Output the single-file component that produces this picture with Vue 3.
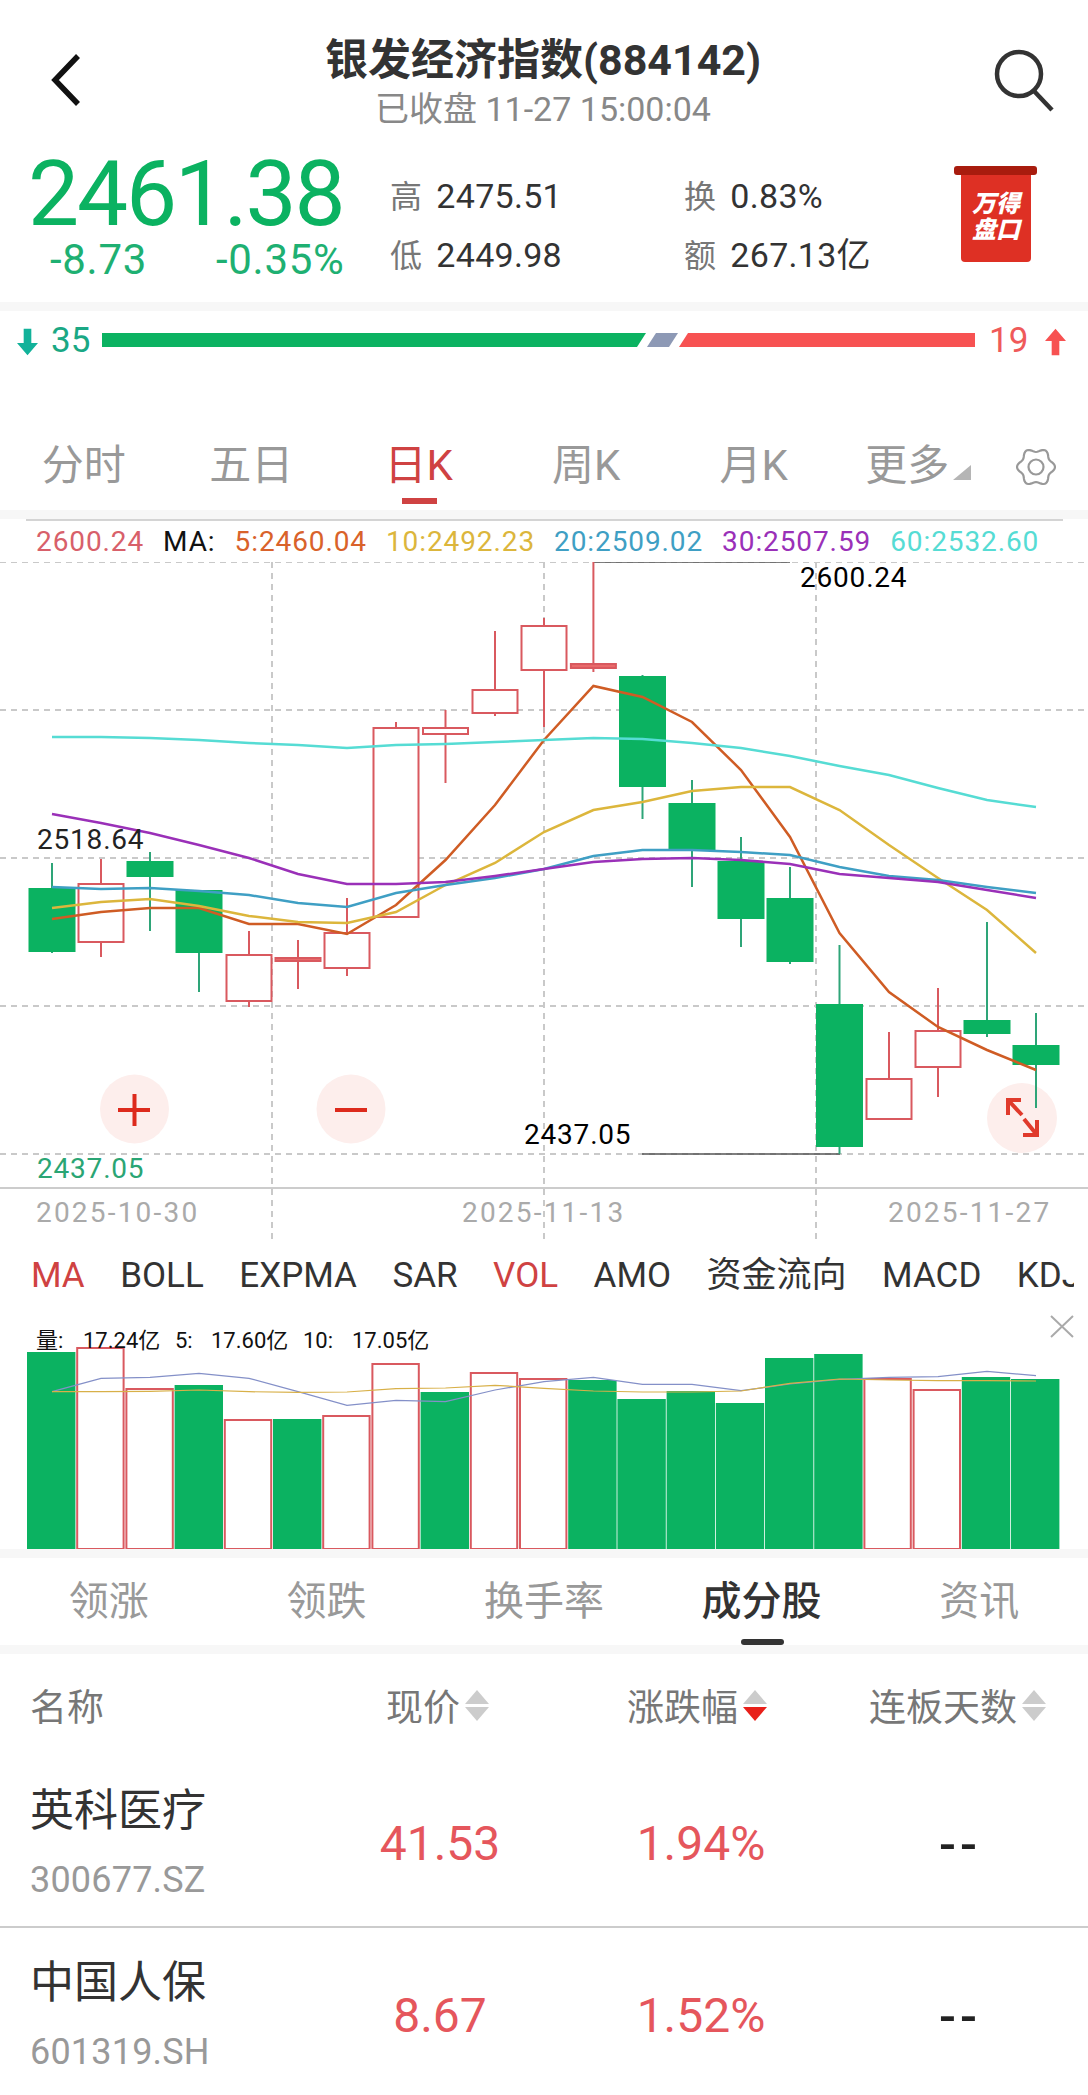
<template>
  <div class="page">
    <!-- 顶部标题 -->
    <header class="top-bar">
      <svg class="back" viewBox="0 0 32 56"><polyline points="28,4 5,28 28,52" /></svg>
      <div class="title-box">
        <div class="title">银发经济指数(884142)</div>
        <div class="subtitle">已收盘 11-27 15:00:04</div>
      </div>
      <svg class="search" viewBox="0 0 64 64">
        <circle cx="27" cy="25" r="22" />
        <line x1="42" y1="42" x2="60" y2="61" />
      </svg>
    </header>

    <section class="quote">
      <div class="price-box">
        <div class="price">2461.38</div>
        <div class="change"><span>-8.73</span><span>-0.35%</span></div>
      </div>
      <div class="stats">
        <div v-for="s in stats" :key="s.label" class="stat">
          <span class="stat-label">{{ s.label }}</span>{{ s.value }}
        </div>
      </div>
      <div class="wind">
        <div class="wind-rod"></div>
        <div class="wind-body"><span>万得</span><span>盘口</span></div>
      </div>
    </section>
    <div class="band"></div>

    <section class="breadth">
      <svg class="b-arrow" viewBox="0 0 22 28"><path d="M7 0h8v15h7L11 28 0 15h7z" fill="#12b29a" /></svg>
      <span class="b-down">35</span>
      <svg class="b-bar" viewBox="0 0 874 14">
        <polygon points="0,0 544,0 535,14 0,14" fill="#0bb261" />
        <polygon points="554,0 576,0 567,14 545,14" fill="#8d99b5" />
        <polygon points="586,0 873,0 873,14 577,14" fill="#f75252" />
      </svg>
      <span class="b-up">19</span>
      <svg class="b-arrow up" viewBox="0 0 22 28"><path d="M7 28h8V13h7L11 0 0 13h7z" fill="#f75252" /></svg>
    </section>

    <nav class="period-tabs">
      <div v-for="t in periods" :key="t" class="period" :class="{ active: t === '日K', more: t === '更多' }">
        {{ t }}<i v-if="t === '更多'" class="more-tri"></i>
      </div>
      <div class="gear-cell">
        <svg class="gear" viewBox="0 0 40 40">
          <path :d="gearPath" />
          <circle cx="20" cy="20" r="7.5" />
        </svg>
      </div>
    </nav>
    <div class="band"></div>
    <div class="chart-rule"></div>

    <div class="legend">
      <span class="lg-high">2600.24</span>
      <span class="lg-ma">MA:</span>
      <span v-for="m in maLines" :key="m.name" :style="{ color: m.text }">{{ m.name }}:{{ m.val }}</span>
    </div>

    <svg class="kline" viewBox="0 562 1088 678">
      <g class="grid">
        <line v-for="y in [562, 710, 858, 1006, 1154]" :key="y" x1="0" x2="1088" :y1="y" :y2="y" />
        <line v-for="x in [272, 544, 816]" :key="x" :x1="x" :x2="x" y1="562" y2="1240" />
      </g>
      <line x1="0" x2="1088" y1="1188" y2="1188" stroke="#ccc" stroke-width="2" />
      <line x1="593" x2="790" y1="562" y2="562" stroke="#555" stroke-width="1.5" />
      <line x1="642" x2="840" y1="1154" y2="1154" stroke="#555" stroke-width="1.5" />

      <circle cx="1022" cy="1118" r="35" class="zoom-btn" />

      <g v-for="(c, i) in candles" :key="i">
        <line :x1="c.x" :x2="c.x" :y1="c.hi" :y2="c.lo" :stroke="c.up ? '#d9595f' : '#2ea578'" stroke-width="2" />
        <rect v-if="c.up" :x="c.x - 22.5" :y="c.top" width="45" :height="c.bot - c.top" :fill="c.bot - c.top < 6 ? '#e96a6a' : '#fff'" stroke="#d9595f" stroke-width="2" />
        <rect v-else :x="c.x - 23.5" :y="c.top" width="47" :height="c.bot - c.top" fill="#0bb261" />
      </g>

      <polyline v-for="m in maLines" :key="m.name" :points="toPoints(m.ys)" fill="none" :stroke="m.color" stroke-width="2.5" />

      <text x="800" y="587" class="t-label">2600.24</text>
      <text x="37" y="849" class="t-label dark">2518.64</text>
      <text x="37" y="1178" class="t-label low">2437.05</text>
      <text x="524" y="1144" class="t-label">2437.05</text>
      <text x="36" y="1222" class="t-date">2025-10-30</text>
      <text x="462" y="1222" class="t-date">2025-11-13</text>
      <text x="888" y="1222" class="t-date">2025-11-27</text>

      <circle cx="134.5" cy="1109" r="34.5" class="zoom-btn" />
      <path d="M118 1110h32M134.5 1094v32" class="zoom-icon" />
      <circle cx="351" cy="1109" r="34.5" class="zoom-btn" />
      <path d="M335 1110h32" class="zoom-icon" />
      <path d="M1008 1100l14 15M1021 1100h-13v15M1037 1135l-13-16M1037 1120v15h-14" class="zoom-icon thin" />
    </svg>

    <div class="indicators">
      <span v-for="n in indicators" :key="n" :class="{ on: n === 'MA' || n === 'VOL' }">{{ n }}</span>
    </div>

    <div class="volume">
      <svg class="vol-svg" viewBox="0 1310 1088 239">
        <template v-for="(b, i) in volBars" :key="i">
          <rect v-if="b.up" :x="27 + i * 49.2 + 1" :y="b.top + 1" width="46.4" :height="1548 - b.top" fill="#fff" stroke="#d9595f" stroke-width="2" />
          <rect v-else :x="27 + i * 49.2" :y="b.top" width="48.4" :height="1549 - b.top" fill="#0bb261" />
        </template>
        <polyline :points="volPoints(volBlue)" fill="none" stroke="#8490c8" stroke-width="1.2" />
        <polyline :points="volPoints(volYellow)" fill="none" stroke="#d8b048" stroke-width="1.2" />
        <text v-for="t in volLabels" :key="t.x" :x="t.x" y="1348" class="vol-text">{{ t.text }}</text>
        <path d="M1051 1316l22 21M1073 1316l-22 21" fill="none" stroke="#aaa" stroke-width="2" />
      </svg>
    </div>
    <div class="band"></div>

    <nav class="list-tabs">
      <div v-for="t in listTabs" :key="t" class="list-tab" :class="{ active: t === '成分股' }">{{ t }}</div>
    </nav>
    <div class="band"></div>

    <div class="table-head">
      <span class="c-name">名称</span>
      <span v-for="h in heads" :key="h.text" :class="h.cls">
        {{ h.text }}
        <i class="sort">
          <b class="tri-up"></b>
          <b class="tri-down" :class="{ red: h.active }"></b>
        </i>
      </span>
    </div>

    <div v-for="r in rows" :key="r.code" class="row">
      <div class="c-name">
        <div class="stock">{{ r.name }}</div>
        <div class="code">{{ r.code }}</div>
      </div>
      <div class="val price-col">{{ r.price }}</div>
      <div class="val pct-col">{{ r.pct }}</div>
      <div class="dash">--</div>
    </div>

    <!-- 底部导航只露出一点 -->
    <div class="bottom-peek">
      <i class="peek a"></i>
      <i class="peek b"></i>
      <i class="peek c"></i>
    </div>
  </div>
</template>

<script setup>
const stats = [
  { label: '高', value: '2475.51' },
  { label: '换', value: '0.83%' },
  { label: '低', value: '2449.98' },
  { label: '额', value: '267.13亿' }
]

const periods = ['分时', '五日', '日K', '周K', '月K', '更多']
const indicators = ['MA', 'BOLL', 'EXPMA', 'SAR', 'VOL', 'AMO', '资金流向', 'MACD', 'KDJ']
const listTabs = ['领涨', '领跌', '换手率', '成分股', '资讯']

const heads = [
  { text: '现价', cls: 'h-price' },
  { text: '涨跌幅', cls: 'h-pct', active: true },
  { text: '连板天数', cls: 'h-days' }
]

const rows = [
  { name: '英科医疗', code: '300677.SZ', price: '41.53', pct: '1.94%' },
  { name: '中国人保', code: '601319.SH', price: '8.67', pct: '1.52%' }
]

// 齿轮外圈
const gearPath = Array.from({ length: 72 }, (_, i) => {
  const a = (i / 72) * Math.PI * 2
  const r = 17 + 2 * Math.cos(6 * a)
  return `${i ? 'L' : 'M'}${(20 + r * Math.cos(a)).toFixed(2)} ${(20 + r * Math.sin(a)).toFixed(2)}`
}).join('') + 'Z'

// 蜡烛图数据，按屏幕坐标记录
const xs = [52, 101, 150, 199, 249, 298, 347, 396, 445.5, 495, 544, 593.4, 642.5, 692, 741, 790, 839.5, 889, 938, 987, 1036]

const raw = [
  [0, 888, 952, 863, 953],
  [1, 884, 942, 859, 957],
  [0, 861, 877, 852, 931],
  [0, 890, 953, 890, 992],
  [1, 955, 1001, 931, 1007],
  [1, 958, 961, 940, 989],
  [1, 933, 968, 898, 976],
  [1, 728, 917, 722, 918],
  [1, 728, 734, 710, 783],
  [1, 690, 713, 631, 716],
  [1, 626, 670, 618, 727],
  [1, 664, 668, 562, 672],
  [0, 676, 787, 675, 819],
  [0, 803, 850, 780, 887],
  [0, 861, 919, 837, 947],
  [0, 898, 962, 867, 964],
  [0, 1004, 1147, 945, 1154],
  [1, 1079, 1119, 1032, 1120],
  [1, 1031, 1067, 988, 1097],
  [0, 1020, 1034, 922, 1037],
  [0, 1045, 1065, 1013, 1108]
]

const candles = raw.map((r, i) => ({
  x: xs[i],
  up: r[0] === 1,
  top: r[1],
  bot: r[2],
  hi: r[3],
  lo: r[4]
}))

const maLines = [
  {
    name: '5', val: '2460.04', color: '#cf5c24', text: '#d9622a',
    ys: [919, 912, 908, 908, 924, 924, 934, 905, 860, 805, 740, 686, 697, 722, 770, 837, 933, 992, 1027, 1050, 1070]
  },
  {
    name: '10', val: '2492.23', color: '#dcb63c', text: '#dcb63c',
    ys: [908, 902, 899, 906, 916, 922, 923, 912, 885, 863, 832, 810, 802, 791, 787, 787, 810, 845, 878, 910, 953]
  },
  {
    name: '20', val: '2509.02', color: '#3f9fc4', text: '#3f9fc4',
    ys: [887, 889, 888, 891, 895, 903, 907, 893, 885, 878, 869, 856, 850, 850, 852, 855, 867, 876, 880, 887, 893]
  },
  {
    name: '30', val: '2507.59', color: '#9a30b8', text: '#9a30b8',
    ys: [814, 823, 833, 845, 858, 874, 884, 884, 882, 876, 869, 862, 859, 858, 860, 864, 874, 878, 882, 890, 898]
  },
  {
    name: '60', val: '2532.60', color: '#56dcd4', text: '#56dcd4',
    ys: [737, 737, 738, 740, 743, 745, 748, 745, 744, 742, 740, 738, 739, 743, 748, 756, 766, 775, 788, 800, 807]
  }
]

const toPoints = (ys) => ys.map((y, i) => `${xs[i]},${y}`).join(' ')

const volTops = [
  [0, 1352], [1, 1347], [1, 1388], [0, 1385], [1, 1419], [0, 1419], [1, 1415],
  [1, 1363], [0, 1392], [1, 1372], [1, 1378], [0, 1380], [0, 1399], [0, 1391],
  [0, 1403], [0, 1358], [0, 1354], [1, 1378], [1, 1389], [0, 1377], [0, 1379]
]
const volBars = volTops.map(([u, top]) => ({ up: u === 1, top }))

const volBlue = [395, 355, 352, 340, 355, 395, 436, 421, 425, 390, 365, 352, 373, 373, 392, 372, 358, 352, 350, 334, 347]
const volYellow = [395, 395, 394, 390, 395, 397, 396, 386, 384, 376, 385, 393, 396, 396, 393, 370, 357, 360, 362, 362, 363]

const volPoints = (ys) => ys.map((y, i) => `${xs[i]},${(1260 + y / 3).toFixed(1)}`).join(' ')

const volLabels = [
  { x: 36, text: '量:' },
  { x: 83, text: '17.24亿' },
  { x: 175, text: '5:' },
  { x: 211, text: '17.60亿' },
  { x: 303, text: '10:' },
  { x: 352, text: '17.05亿' }
]
</script>

<style>
html, body {
  margin: 0;
  background: #fff;
}
</style>

<style scoped>
.page {
  width: 1088px;
  height: 2095px;
  overflow: hidden;
  background: #fff;
  position: relative;
  font-family: Roboto, "Noto Sans CJK SC", sans-serif;
}

.top-bar {
  height: 140px;
  display: flex;
  align-items: flex-start;
  justify-content: space-between;
  box-sizing: border-box;
  padding: 40px 30px 0 50px;
}

.back {
  width: 32px;
  height: 56px;
  margin-top: 12px;
  fill: none;
  stroke: #111;
  stroke-width: 5.5;
}

.title-box {
  text-align: center;
  margin-left: 12px;
}

.title {
  font-size: 43px;
  line-height: 40px;
  font-weight: 700;
  color: #333;
  white-space: nowrap;
}

.subtitle {
  font-size: 34px;
  line-height: 34px;
  margin-top: 12px;
  color: #888;
  white-space: nowrap;
}

.search {
  width: 64px;
  height: 64px;
  margin-top: 9px;
  margin-right: 2px;
  fill: none;
  stroke: #333;
  stroke-width: 4.5;
}

.quote {
  height: 162px;
  display: flex;
  box-sizing: border-box;
}

.price-box {
  width: 360px;
  padding-left: 28px;
  box-sizing: border-box;
}

.price {
  font-size: 91px;
  line-height: 84px;
  letter-spacing: -2.2px;
  color: #0bb261;
  margin-top: 12px;
  white-space: nowrap;
}

.change {
  display: flex;
  gap: 69px;
  padding-left: 22px;
  font-size: 42px;
  line-height: 40px;
  letter-spacing: 0.7px;
  color: #1eb072;
  margin-top: 4px;
}

.stats {
  width: 584px;
  margin-left: 30px;
  margin-top: 36px;
  display: grid;
  grid-template-columns: 294px 1fr;
  grid-auto-rows: 59px;
  font-size: 34px;
  line-height: 40px;
  letter-spacing: 0.3px;
  color: #333;
}

.stat {
  white-space: nowrap;
}

.stat-label {
  color: #777;
  font-size: 32px;
  margin-right: 14px;
}

.wind {
  position: absolute;
  left: 954px;
  top: 166px;
  width: 83px;
}

.wind-rod {
  height: 9px;
  background: #a81c0e;
  border-radius: 3px;
}

.wind-body {
  width: 70px;
  height: 87px;
  margin-left: 7px;
  box-sizing: border-box;
  padding-top: 16px;
  background: #de3024;
  border-radius: 0 0 4px 4px;
  color: #fff;
  font-size: 24px;
  line-height: 26px;
  font-weight: 900;
  font-style: italic;
  text-align: center;
}

.wind-body span {
  display: block;
}

.band {
  height: 9px;
  background: #f7f7f7;
}

.breadth {
  height: 121px;
  display: flex;
  align-items: flex-start;
  padding-left: 17px;
  box-sizing: border-box;
  font-size: 35px;
  line-height: 40px;
}

.b-arrow {
  width: 21px;
  height: 28px;
  margin-top: 17px;
}

.b-arrow.up {
  margin-left: 17px;
}

.b-down {
  color: #1aa884;
  margin-left: 13px;
  margin-top: 10px;
  width: 51px;
}

.b-up {
  color: #ef5a5a;
  margin-left: 13px;
  margin-top: 10px;
}

.b-bar {
  width: 874px;
  height: 14px;
  margin-top: 22px;
}

.period-tabs {
  display: grid;
  grid-template-columns: repeat(6, 167.5px) 83px;
  height: 78px;
  padding-top: 13px;
  font-size: 42px;
  line-height: 42px;
  color: #999;
  text-align: center;
  box-sizing: border-box;
}

.period {
  position: relative;
  white-space: nowrap;
}

.period.more {
  padding-right: 28px;
}

.period.active {
  color: #cf4242;
}

.period.active::after {
  content: '';
  position: absolute;
  left: 50%;
  margin-left: -17px;
  top: 53px;
  width: 35px;
  height: 6px;
  background: #cf4242;
}

.more-tri {
  position: absolute;
  left: 115px;
  top: 20px;
  border-left: 18px solid transparent;
  border-bottom: 15px solid #b5b5b5;
}

.gear-cell {
  padding-left: 11px;
}

.gear {
  display: block;
  width: 40px;
  height: 40px;
  margin-top: 2px;
  fill: none;
  stroke: #999;
  stroke-width: 2.2;
}

.chart-rule {
  height: 2px;
  margin: 0 25px 0 26px;
  background: #d4d4d4;
}

.legend {
  height: 41px;
  display: flex;
  align-items: center;
  gap: 19px;
  padding-left: 36px;
  font-size: 28px;
  letter-spacing: 0.9px;
  white-space: nowrap;
}

.lg-high {
  color: #d8606a;
}

.lg-ma {
  color: #111;
}

.kline {
  display: block;
  width: 1088px;
  height: 678px;
}

.grid line {
  stroke: #c9c9c9;
  stroke-width: 2;
  stroke-dasharray: 6 5;
}

.t-label {
  font-size: 28px;
  letter-spacing: 0.8px;
  fill: #000;
}

.t-label.dark {
  fill: #222;
}

.t-label.low {
  fill: #2aa574;
}

.t-date {
  font-size: 28px;
  letter-spacing: 2.2px;
  fill: #aaa;
}

.zoom-btn {
  fill: #fdeeec;
}

.zoom-icon {
  fill: none;
  stroke: #dd2a1c;
  stroke-width: 4;
}

.zoom-icon.thin {
  stroke: #e03a2c;
}

.indicators {
  height: 70px;
  box-sizing: border-box;
  margin-right: 14px;
  padding-left: 31px;
  display: flex;
  gap: 35.5px;
  font-size: 35px;
  line-height: 72px;
  overflow: hidden;
  white-space: nowrap;
  color: #333;
}

.indicators span {
  flex: none;
}

.indicators .on {
  color: #cf4242;
}

.volume {
  height: 239px;
}

.vol-svg {
  display: block;
  width: 1088px;
  height: 239px;
}

.vol-text {
  font-size: 22px;
  fill: #111;
}

.list-tabs {
  height: 87px;
  display: grid;
  grid-template-columns: repeat(5, 1fr);
  font-size: 40px;
  line-height: 88px;
  color: #999;
  text-align: center;
}

.list-tab {
  position: relative;
}

.list-tab.active {
  color: #333;
  font-weight: 500;
}

.list-tab.active::after {
  content: '';
  position: absolute;
  left: 50%;
  margin-left: -21px;
  top: 81px;
  width: 43px;
  height: 6px;
  border-radius: 3px;
  background: #333;
}

.table-head {
  height: 102px;
  display: flex;
  align-items: center;
  font-size: 37px;
  color: #777;
}

.table-head .c-name {
  padding-left: 30px;
  width: 386px;
  box-sizing: border-box;
}

.h-price {
  width: 241px;
  display: flex;
  align-items: center;
}

.h-pct {
  width: 242px;
  display: flex;
  align-items: center;
}

.h-days {
  display: flex;
  align-items: center;
}

.sort {
  display: flex;
  flex-direction: column;
  gap: 3px;
  margin-left: 5px;
}

.tri-up {
  width: 0;
  height: 0;
  border-left: 12.5px solid transparent;
  border-right: 12.5px solid transparent;
  border-bottom: 14px solid #ccc;
}

.tri-down {
  width: 0;
  height: 0;
  border-left: 12.5px solid transparent;
  border-right: 12.5px solid transparent;
  border-top: 14px solid #ccc;
}

.tri-down.red {
  border-top-color: #e8201a;
}

.row {
  height: 172px;
  display: flex;
  position: relative;
  border-bottom: 2px solid #ccc;
  box-sizing: border-box;
}

.row:last-of-type {
  height: 149px;
  border-bottom-color: #ddd;
}

.row .c-name {
  width: 340px;
  padding-left: 30px;
  box-sizing: border-box;
}

.stock {
  font-size: 44px;
  line-height: 50px;
  color: #333;
  margin-top: 30px;
}

.code {
  font-size: 36px;
  line-height: 40px;
  margin-top: 24px;
  color: #999;
  letter-spacing: 0.2px;
}

.val {
  font-size: 48px;
  line-height: 50px;
  margin-top: 63px;
  color: #e5565c;
  text-align: center;
}

.price-col {
  width: 200px;
}

.pct-col {
  width: 322px;
}

.dash {
  position: absolute;
  left: 920px;
  width: 80px;
  top: 64px;
  text-align: center;
  font-size: 50px;
  line-height: 50px;
  letter-spacing: 4px;
  font-weight: 500;
  color: #222;
}

.bottom-peek {
  display: flex;
  padding-top: 16px;
}

.peek {
  height: 4px;
  background: #bbb;
  border-radius: 2px 2px 0 0;
}

.peek.a {
  width: 21px;
  margin-left: 249px;
}

.peek.b {
  width: 21px;
  margin-left: 5px;
}

.peek.c {
  width: 44px;
  margin-left: 498px;
}
</style>
